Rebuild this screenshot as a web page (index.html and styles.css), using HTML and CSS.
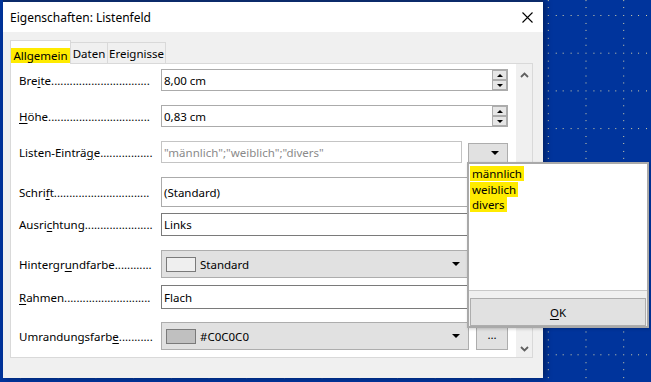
FILE: index.html
```html
<!DOCTYPE html>
<html lang="de">
<head>
    <meta charset="UTF-8">
    <meta name="viewport" content="width=device-width, initial-scale=1.0">
    <title>Eigenschaften: Listenfeld</title>
    <link rel="stylesheet" href="styles.css">
</head>
<body>
    <!-- Punktraster im Hintergrund -->
    <svg class="raster" width="651" height="382">
        <defs>
            <pattern id="punkte" x="20" y="15" width="37.7" height="37.7" patternUnits="userSpaceOnUse">
                <g fill="#d9d3a9" shape-rendering="crispEdges">
                    <rect x="0" y="0" width="1" height="1"/>
                    <rect x="7.5" y="0" width="1" height="1"/>
                    <rect x="15" y="0" width="1" height="1"/>
                    <rect x="22.6" y="0" width="1" height="1"/>
                    <rect x="30.1" y="0" width="1" height="1"/>
                    <rect x="0" y="7.5" width="1" height="1"/>
                    <rect x="0" y="15" width="1" height="1"/>
                    <rect x="0" y="22.6" width="1" height="1"/>
                    <rect x="0" y="30.1" width="1" height="1"/>
                </g>
            </pattern>
        </defs>
        <rect width="651" height="382" fill="url(#punkte)"/>
    </svg>

    <!-- Dialogfenster -->
    <div class="fenster">
        <div class="titel">
            <span>Eigenschaften: Listenfeld</span>
            <svg class="schliessen" width="11" height="11" viewBox="0 0 11 11">
                <path d="M0.5 0.5L10.5 10.5M10.5 0.5L0.5 10.5" stroke="#000" stroke-width="1.1" fill="none"/>
            </svg>
        </div>

        <div class="inhalt">
            <!-- Reiter -->
            <div class="reiter">
                <div class="tab aktiv"><span class="mark">Allgemein</span></div>
                <div class="tab tab-daten">Daten</div>
                <div class="tab tab-ereignisse">Ereignisse</div>
            </div>

            <div class="panel">
                <div class="felder">
                    <div class="zeile z1">
                        <label><span class="name">Bre<u>i</u>te</span><span class="punkte">................................</span></label>
                        <div class="feld">8,00 cm
                            <div class="spin"><div><i class="hoch"></i></div><div><i class="runter"></i></div></div>
                        </div>
                    </div>

                    <div class="zeile z2">
                        <label><span class="name"><u>H</u>öhe</span><span class="punkte">.................................</span></label>
                        <div class="feld">0,83 cm
                            <div class="spin"><div><i class="hoch"></i></div><div><i class="runter"></i></div></div>
                        </div>
                    </div>

                    <div class="zeile z3">
                        <label><span class="name">Listen-Einträ<u>g</u>e</span><span class="punkte">.................</span></label>
                        <div class="feld grau">"männlich";"weiblich";"divers"</div>
                        <div class="knopf-liste"><i class="pfeil"></i></div>
                    </div>

                    <div class="zeile z4">
                        <label><span class="name">Schri<u>f</u>t</span><span class="punkte">...............................</span></label>
                        <div class="feld">(Standard)</div>
                    </div>

                    <div class="zeile z5">
                        <label><span class="name">Ausri<u>c</u>htung</span><span class="punkte">......................</span></label>
                        <div class="feld dunkel">Links</div>
                    </div>

                    <div class="zeile z6">
                        <label><span class="name">Hintergr<u>u</u>ndfarbe</span><span class="punkte">............</span></label>
                        <div class="auswahl">
                            <span class="farbe hell"></span>Standard<i class="pfeil"></i>
                        </div>
                        <div class="knopf-mehr">...</div>
                    </div>

                    <div class="zeile z7">
                        <label><span class="name"><u>R</u>ahmen</span><span class="punkte">............................</span></label>
                        <div class="feld dunkel">Flach</div>
                    </div>

                    <div class="zeile z8">
                        <label><span class="name">Umrandungsfarb<u>e</u></span><span class="punkte">...........</span></label>
                        <div class="auswahl">
                            <span class="farbe silber"></span>#C0C0C0<i class="pfeil"></i>
                        </div>
                        <div class="knopf-mehr">...</div>
                    </div>
                </div>

                <!-- Bildlaufleiste -->
                <div class="scrollleiste">
                    <svg width="9" height="6" viewBox="0 0 9 6"><path d="M1 5L4.5 1.5L8 5" stroke="#606060" stroke-width="1.8" fill="none"/></svg>
                    <svg width="9" height="6" viewBox="0 0 9 6"><path d="M1 1L4.5 4.5L8 1" stroke="#606060" stroke-width="1.8" fill="none"/></svg>
                </div>
            </div>
        </div>
    </div>

    <!-- Aufgeklappte Liste -->
    <div class="popup">
        <div class="liste">
            <div><span class="mark">männlich</span></div>
            <div><span class="mark">weiblich</span></div>
            <div><span class="mark">divers</span></div>
        </div>
        <div class="popup-fuss">
            <div class="knopf-ok"><u>O</u>K</div>
        </div>
    </div>
</body>
</html>
```

FILE: styles.css
```css
/* Allgemein */
* {
    box-sizing: border-box;
}

body {
    margin: 0;
    width: 651px;
    height: 382px;
    overflow: hidden;
    position: relative;
    background-color: #00349c;
    font-family: "Noto Sans", sans-serif;
    font-size: 11.5px;
    color: #000;
}

u {
    text-underline-offset: 2px;
}

.raster {
    position: absolute;
    top: 0;
    left: 0;
}

/* Fenster */
.fenster {
    position: relative;
    margin-left: 3px;
    width: 540px;
    height: 378px;
    background-color: #f0f0f0;
    border-top: 2px solid #0b2a6a;
    box-shadow: 3px 0 6px rgba(0, 0, 0, 0.35);
}

.titel {
    height: 30px;
    background-color: #fff;
    display: flex;
    align-items: center;
    justify-content: space-between;
    padding: 0 10px 0 7px;
    font-size: 12px;
}

.inhalt {
    padding: 8px 0 0 7px;
}

/* Reiter */
.reiter {
    display: flex;
    align-items: flex-end;
    height: 23px;
}

.tab {
    height: 21px;
    display: flex;
    align-items: center;
    justify-content: center;
    border: 1px solid #d9d9d9;
    border-bottom: none;
    background-color: #f0f0f0;
    margin-left: -1px;
}

.tab.aktiv {
    margin-left: 0;
    width: 61px;
    height: 24px;
    margin-bottom: -1px;
    background-color: #fff;
    position: relative;
    z-index: 1;
    align-items: flex-end;
    padding-bottom: 1px;
}

.tab-daten {
    width: 38px;
}

.tab-ereignisse {
    width: 59px;
}

.mark {
    background-color: #ffeb00;
    padding: 0 2px;
}

/* Panel */
.panel {
    width: 523px;
    height: 295px;
    border: 1px solid #d9d9d9;
    background-color: #fff;
    display: flex;
}

.felder {
    flex: 1;
    padding: 5px 8px 0 8px;
}

.zeile {
    display: flex;
    align-items: center;
    height: 22px;
    margin-bottom: 14px;
}

.z4 { height: 30px; margin-bottom: 6px; }
.z5 { height: 23px; }
.z6 { height: 28px; margin-bottom: 7px; }
.z7 { height: 24px; margin-bottom: 13px; }
.z8 { height: 28px; }

.zeile label {
    width: 142px;
    flex-shrink: 0;
    display: flex;
    white-space: nowrap;
    padding-right: 8px;
}

.punkte {
    overflow: hidden;
}

/* Eingabefelder */
.feld {
    flex: 1;
    height: 100%;
    border: 1px solid #ababab;
    background-color: #fff;
    display: flex;
    align-items: center;
    padding-left: 2px;
    white-space: nowrap;
}

.feld.grau {
    flex: none;
    width: 301px;
    color: #8a8a8a;
    border-color: #c4c4c4;
}

.feld.dunkel {
    border-color: #7a7a7a;
}

.spin {
    margin-left: auto;
    width: 15px;
    height: 100%;
    display: flex;
    flex-direction: column;
}

.spin div {
    flex: 1;
    border: 1px solid #adadad;
    background-color: #e6e6e6;
    display: flex;
    align-items: center;
    justify-content: center;
}

.hoch {
    border-left: 3px solid transparent;
    border-right: 3px solid transparent;
    border-bottom: 3px solid #000;
}

.runter {
    border-left: 3px solid transparent;
    border-right: 3px solid transparent;
    border-top: 3px solid #000;
}

.pfeil {
    border-left: 4px solid transparent;
    border-right: 4px solid transparent;
    border-top: 4px solid #000;
}

.knopf-liste {
    margin-left: 6px;
    width: 40px;
    height: 20px;
    align-self: flex-end;
    background-color: #e1e1e1;
    border: 1px solid #adadad;
    display: flex;
    align-items: center;
    justify-content: flex-end;
    padding-right: 8px;
}

.auswahl {
    width: 308px;
    height: 100%;
    background-color: #e1e1e1;
    border: 1px solid #adadad;
    display: flex;
    align-items: center;
    padding: 0 8px 0 4px;
}

.auswahl .pfeil {
    margin-left: auto;
}

.farbe {
    width: 30px;
    height: 15px;
    border: 1px solid #7a7a7a;
    margin-right: 4px;
}

.farbe.hell {
    background-color: #efefef;
}

.farbe.silber {
    background-color: #c0c0c0;
}

.knopf-mehr {
    margin-left: 7px;
    width: 32px;
    height: 100%;
    background-color: #e1e1e1;
    border: 1px solid #adadad;
    display: flex;
    align-items: center;
    justify-content: center;
    padding-bottom: 3px;
}

/* Bildlaufleiste */
.scrollleiste {
    width: 16px;
    background-color: #f0f0f0;
    display: flex;
    flex-direction: column;
    justify-content: space-between;
    align-items: center;
    padding: 8px 0 5px;
}

/* Aufgeklappte Liste */
.popup {
    position: absolute;
    left: 467px;
    top: 162px;
    width: 182px;
    height: 166px;
    border: 2px solid #a9a9a9;
    background-color: #f0f0f0;
    display: flex;
    flex-direction: column;
    box-shadow: 1px 1px 3px rgba(0, 0, 0, 0.2);
}

.liste {
    height: 127px;
    background-color: #fff;
    border-bottom: 1px solid #c8c8c8;
    padding: 2px 0 0 1px;
    line-height: 15.5px;
}

.popup-fuss {
    flex: 1;
    padding: 7px 1px 0;
}

.knopf-ok {
    height: 28px;
    background-color: #e1e1e1;
    border: 1px solid #adadad;
    display: flex;
    align-items: center;
    justify-content: center;
}
```
